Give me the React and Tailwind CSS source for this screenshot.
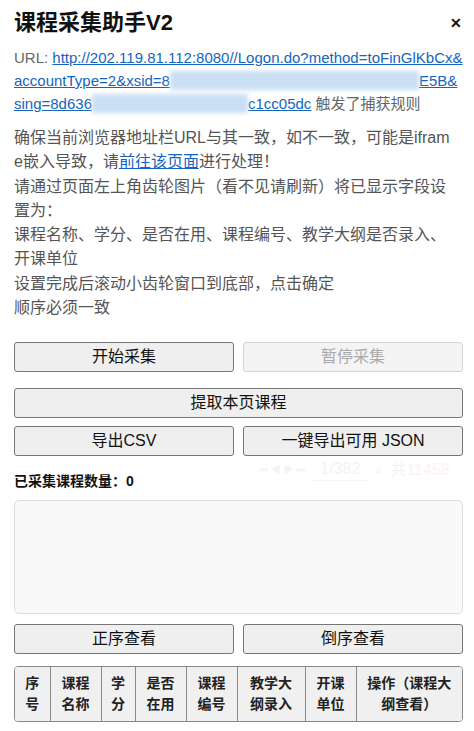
import React from "react";

const font = { fontFamily: '"Liberation Sans", "Noto Sans CJK SC", sans-serif' };

const Btn = ({ children, disabled }) => (
  <button
    disabled={disabled}
    className={
      disabled
        ? "h-[30px] flex-1 rounded-[3px] border border-[#d4d4d4] bg-[#f4f4f4] text-[16px] text-[#a9a9a9]"
        : "h-[30px] flex-1 rounded-[3px] border border-[#767676] bg-[#efefef] text-[16px] text-[#111]"
    }
  >
    {children}
  </button>
);

const Blur = ({ w }) => (
  <span className={`inline-block h-[19px] align-[-4px] bg-[#cadff4] blur-[2px] ${w}`} />
);

const cols = [
  ["序", "号", "w-[35px]"],
  ["课程", "名称", "w-[51px]"],
  ["学", "分", "w-[34px]"],
  ["是否", "在用", "w-[51px]"],
  ["课程", "编号", "w-[51px]"],
  ["教学大", "纲录入", "w-[68px]"],
  ["开课", "单位", "w-[51px]"],
  ["操作（课程大", "纲查看）", ""],
];

export default function App() {
  return (
    <div className="min-h-[731px] w-[474px] bg-white pl-[14px] pr-[11px]" style={font}>
      <div className="flex h-[44px] items-center justify-between pt-[2px]">
        <h1 className="text-[22px] font-bold leading-[30px] text-[#111]">课程采集助手V2</h1>
        <span className="mr-[1px] mt-[1px] text-[14px] font-bold text-[#111]">✕</span>
      </div>

      <div className="mt-[2px] whitespace-nowrap text-[15px] leading-[23px] text-[#666]">
        <div>
          URL: <a className="text-[#1565c0] underline">http://202.119.81.112:8080//Logon.do?method=toFinGlKbCx&amp;</a>
        </div>
        <div>
          <a className="text-[#1565c0] underline">
            accountType=2&amp;xsid=8
            <Blur w="w-[249px]" />
            E5B&amp;
          </a>
        </div>
        <div>
          <a className="text-[#1565c0] underline">
            sing=8d636
            <Blur w="w-[156px]" />
            c1cc05dc
          </a>{" "}
          触发了捕获规则
        </div>
      </div>

      <div className="mt-[11px] whitespace-nowrap text-[16px] leading-[24.3px] text-[#555]">
        <div>确保当前浏览器地址栏URL与其一致，如不一致，可能是ifram</div>
        <div>
          e嵌入导致，请<a className="text-[#1565c0] underline">前往该页面</a>进行处理！
        </div>
        <div>请通过页面左上角齿轮图片（看不见请刷新）将已显示字段设</div>
        <div>置为：</div>
        <div>课程名称、学分、是否在用、课程编号、教学大纲是否录入、</div>
        <div>开课单位</div>
        <div>设置完成后滚动小齿轮窗口到底部，点击确定</div>
        <div>顺序必须一致</div>
      </div>

      <div className="mt-[22px] flex gap-[9px]">
        <Btn>开始采集</Btn>
        <Btn disabled>暂停采集</Btn>
      </div>
      <div className="mt-[16px] flex">
        <Btn>提取本页课程</Btn>
      </div>
      <div className="mt-[8px] flex gap-[9px]">
        <Btn>导出CSV</Btn>
        <Btn>一键导出可用 JSON</Btn>
      </div>

      <div className="relative mt-[14px] h-[22px] text-[14px] font-bold leading-[22px] text-[#111]">
        已采集课程数量：0
        <div className="pointer-events-none absolute left-[245px] top-[-12px] flex items-center gap-[7px] whitespace-nowrap text-[14px] font-normal text-[#f3f3f3]">
          <span className="text-[10px]">⏮ ◀ ▶ ⏭</span>
          <span className="border-b border-[#f5f5f5] px-[8px] text-[16px]">1/382</span>
          <span>⌕</span>
          <span className="text-[16px]">
            共<span className="text-[#fef1f4]">11458</span>
          </span>
        </div>
      </div>

      <div className="mt-[8px] h-[114px] rounded-[5px] border border-[#dcdcdc] bg-[#f9f9f9]" />

      <div className="mt-[10px] flex gap-[9px]">
        <Btn>正序查看</Btn>
        <Btn>倒序查看</Btn>
      </div>

      <div className="mt-[12px] overflow-hidden rounded-[4px] border border-[#888]">
        <table className="w-full border-collapse text-[14px] font-bold leading-[21px] text-[#222]">
          <thead>
            <tr className="bg-[#f0f0f0]">
              {cols.map(([a, b, w], i) => (
                <th
                  key={i}
                  className={`${w} py-[6px] text-center ${i > 0 ? "border-l border-[#888]" : ""}`}
                >
                  <div>{a}</div>
                  <div>{b}</div>
                </th>
              ))}
            </tr>
          </thead>
        </table>
      </div>
    </div>
  );
}
